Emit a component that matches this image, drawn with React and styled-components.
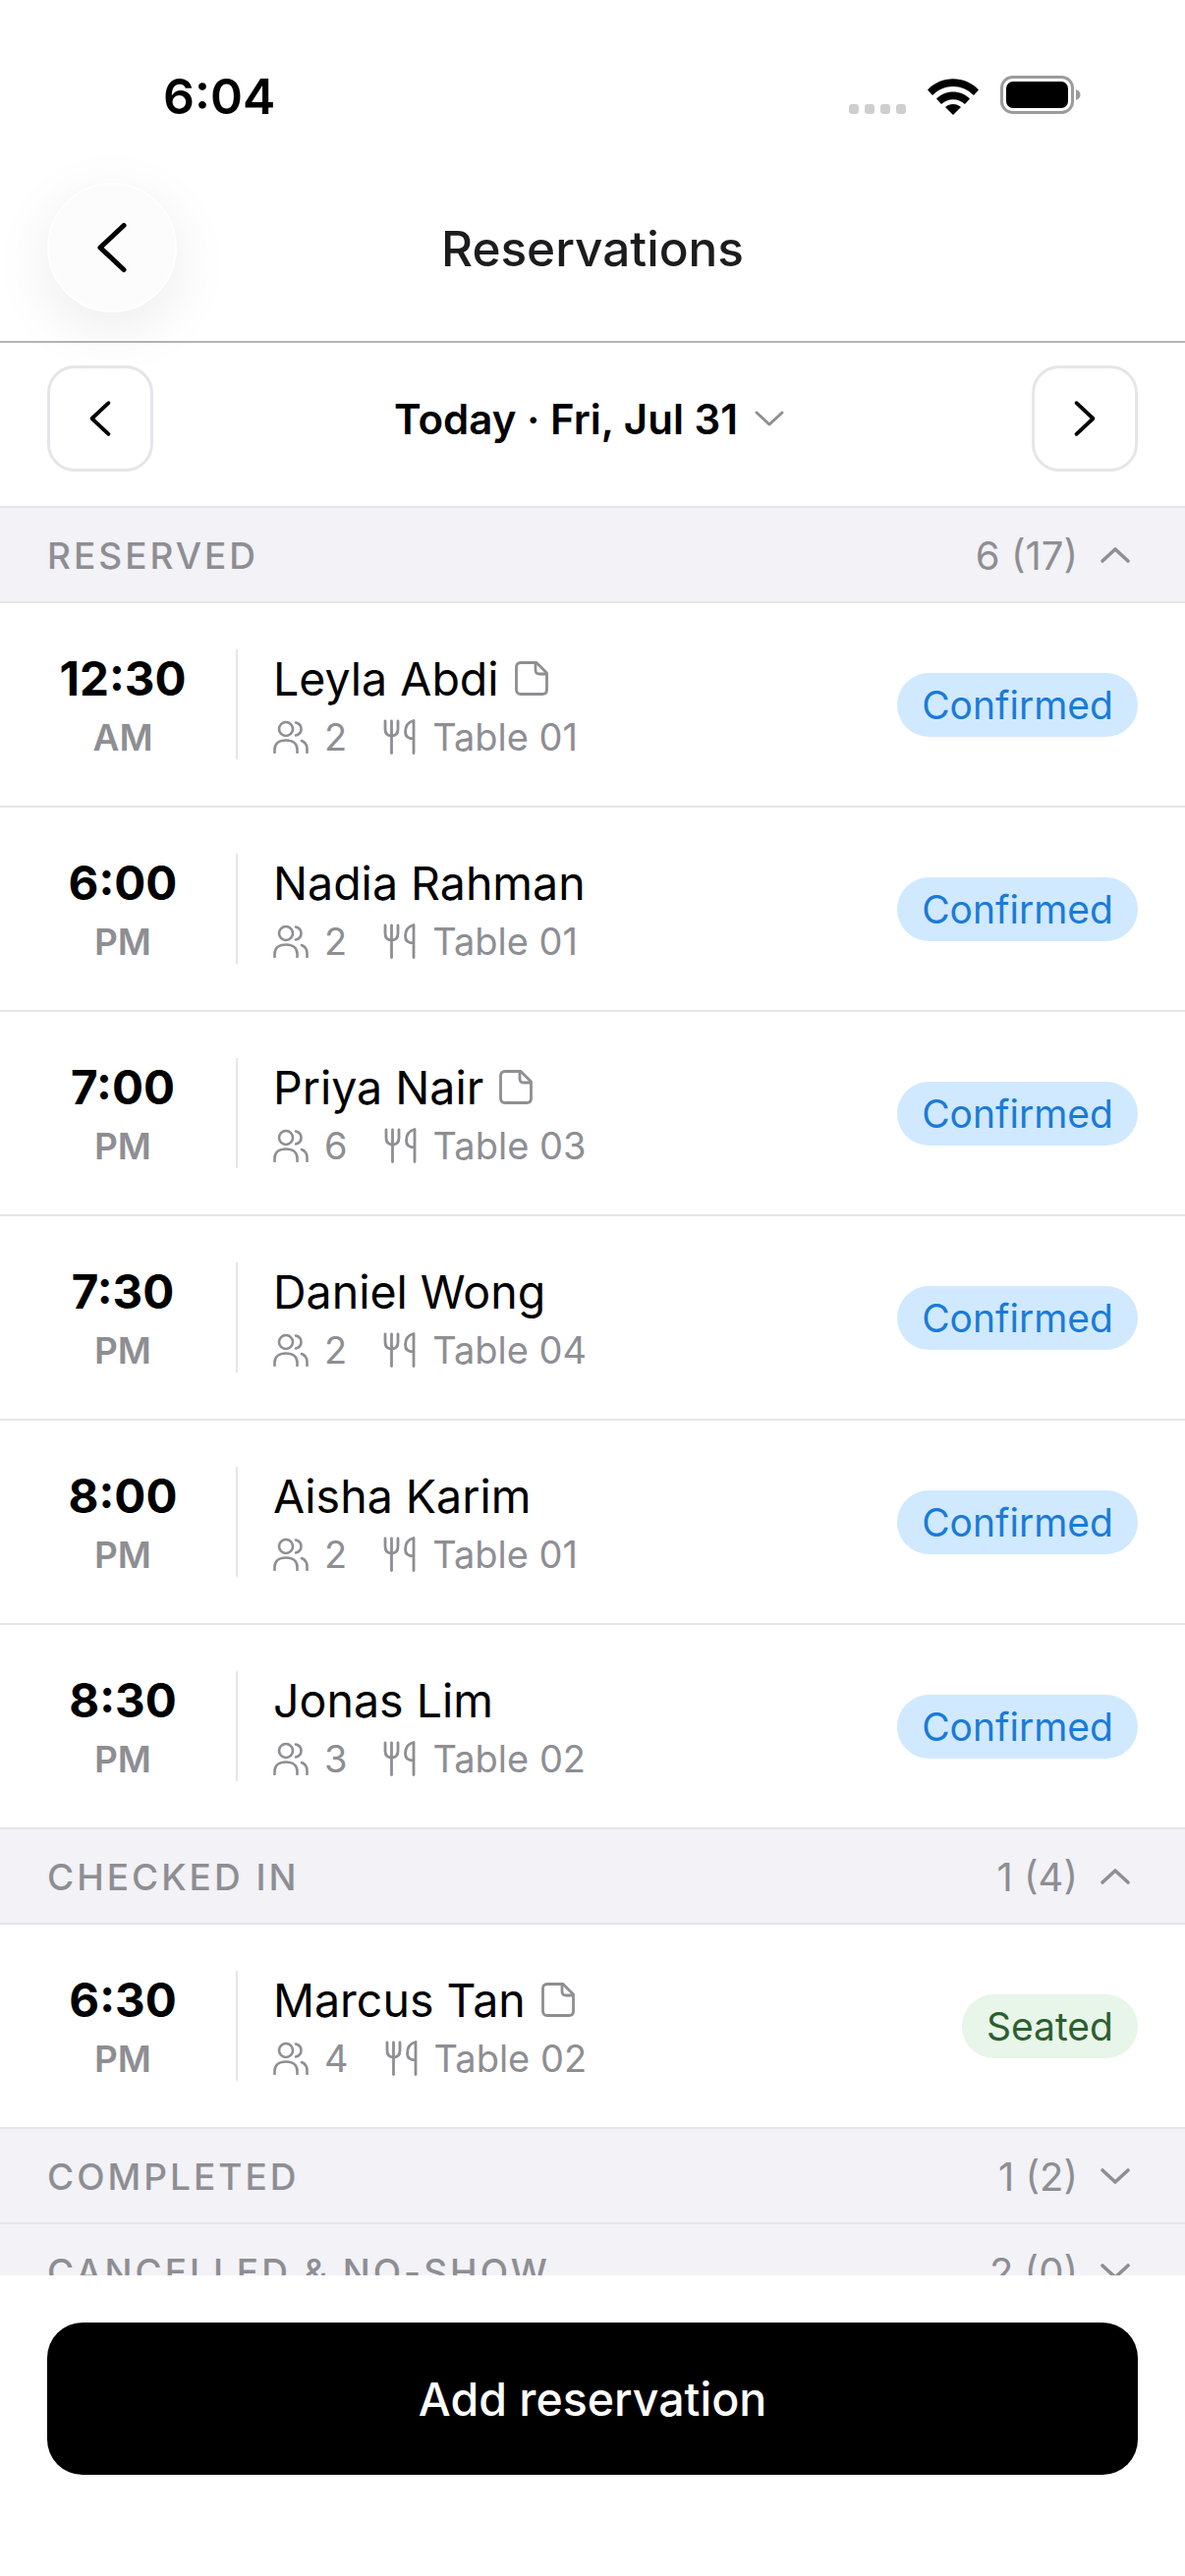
import React from "react";
import styled, { createGlobalStyle } from "styled-components";

const GlobalStyle = createGlobalStyle`
  html, body { margin: 0; padding: 0; background: #fff; }
  body { font-family: Inter, "Noto Sans", sans-serif; }
  * { box-sizing: border-box; }
`;

const sections = [
  {
    title: "RESERVED",
    count: "6 (17)",
    open: true,
    rows: [
      { time: "12:30", half: "AM", name: "Leyla Abdi", note: true, guests: 2, table: "Table 01", status: "Confirmed" },
      { time: "6:00", half: "PM", name: "Nadia Rahman", guests: 2, table: "Table 01", status: "Confirmed" },
      { time: "7:00", half: "PM", name: "Priya Nair", note: true, guests: 6, table: "Table 03", status: "Confirmed" },
      { time: "7:30", half: "PM", name: "Daniel Wong", guests: 2, table: "Table 04", status: "Confirmed" },
      { time: "8:00", half: "PM", name: "Aisha Karim", guests: 2, table: "Table 01", status: "Confirmed" },
      { time: "8:30", half: "PM", name: "Jonas Lim", guests: 3, table: "Table 02", status: "Confirmed" },
    ],
  },
  {
    title: "CHECKED IN",
    count: "1 (4)",
    open: true,
    rows: [{ time: "6:30", half: "PM", name: "Marcus Tan", note: true, guests: 4, table: "Table 02", status: "Seated" }],
  },
  { title: "COMPLETED", count: "1 (2)", open: false, rows: [] },
  { title: "CANCELLED & NO-SHOW", count: "2 (0)", open: false, rows: [] },
];

const Chevron = ({ dir, size = 38, color = "#000", width = 3.6 }) => {
  const paths = {
    left: "M26 3 L10 18 L26 33",
    right: "M10 3 L26 18 L10 33",
    up: "M5 24 L18 12 L31 24",
    down: "M5 12 L18 24 L31 12",
  };
  return (
    <svg width={size} height={size} viewBox="0 0 36 36" fill="none">
      <path d={paths[dir]} stroke={color} strokeWidth={width} strokeLinecap="round" strokeLinejoin="round" />
    </svg>
  );
};

const WifiIcon = () => (
  <svg width="52" height="38" viewBox="0 0 52 38">
    <path d="M0 12.5 C14 -2.5 38 -2.5 52 12.5 L47 18 C35 6 17 6 5 18 Z" fill="#000" />
    <path d="M9 21.5 C18 12 34 12 43 21.5 L38 27 C31 20.5 21 20.5 14 27 Z" fill="#000" />
    <path d="M18 30 C22.5 26 29.5 26 34 30 L26 38 Z" fill="#000" />
  </svg>
);

const BatteryIcon = () => (
  <svg width="82" height="40" viewBox="0 0 82 40">
    <rect x="1.5" y="1.5" width="72" height="36" rx="11" fill="none" stroke="#9b9b9b" strokeWidth="3" />
    <rect x="6" y="6" width="63" height="27" rx="7" fill="#000" />
    <path d="M77 14 C80 15 81.5 17 81.5 19.5 C81.5 22 80 24 77 25 Z" fill="#9b9b9b" />
  </svg>
);

const PeopleIcon = () => (
  <svg width="36" height="34" viewBox="0 0 36 34" fill="none" stroke="#8e8e93" strokeWidth="2.6" strokeLinecap="round">
    <circle cx="13" cy="9" r="7" />
    <path d="M1.5 33 V30 C1.5 24 6 20.5 13 20.5 C20 20.5 24.5 24 24.5 30 V33" />
    <path d="M23 2.5 C27 3.5 28.5 6 28.5 9 C28.5 12 27 14.5 23 15.5" />
    <path d="M29 21 C32.5 22.5 34.5 25.5 34.5 29 V33" />
  </svg>
);

const UtensilsIcon = () => (
  <svg width="34" height="36" viewBox="0 0 34 36" fill="none" stroke="#8e8e93" strokeWidth="2.8" strokeLinecap="round" strokeLinejoin="round">
    <path d="M2 2 V10 C2 15 5 17 8.5 17 C12 17 15 15 15 10 V2" />
    <path d="M8.5 2 V34.5" />
    <path d="M31 34.5 V1.5 C25 3 22.5 8 22.5 13 C22.5 17.5 25 20 31 20" />
  </svg>
);

const NoteIcon = () => (
  <svg width="34" height="35" viewBox="0 0 34 35" fill="none" stroke="#8e8e93" strokeWidth="2.8" strokeLinejoin="round">
    <path d="M6 1.5 H22 L32.5 12 V29 C32.5 31.5 31 33.5 28 33.5 H6 C3 33.5 1.5 31.5 1.5 29 V6 C1.5 3.5 3 1.5 6 1.5 Z" />
    <path d="M21 1.5 V9 C21 11.5 22.5 13 25 13 H32.5" />
  </svg>
);

const App = () => (
  <Screen>
    <GlobalStyle />
    <StatusBar>
      <Clock>6:04</Clock>
      <StatusIcons>
        <Signal>
          <i />
          <i />
          <i />
          <i />
        </Signal>
        <WifiIcon />
        <BatteryIcon />
      </StatusIcons>
    </StatusBar>

    <Header>
      <BackButton>
        <Chevron dir="left" size={54} width={3.4} />
      </BackButton>
      <Title>Reservations</Title>
      <span />
    </Header>

    <DateBar>
      <DateButton>
        <Chevron dir="left" />
      </DateButton>
      <DateLabel>
        Today · Fri, Jul 31
        <Chevron dir="down" size={36} color="#8e8e93" width={3} />
      </DateLabel>
      <DateButton>
        <Chevron dir="right" />
      </DateButton>
    </DateBar>

    <List>
      {sections.map((section) => (
        <section key={section.title}>
          <SectionHead>
            <SectionTitle>{section.title}</SectionTitle>
            <SectionMeta>
              {section.count}
              <Chevron dir={section.open ? "up" : "down"} size={36} color="#8e8e93" />
            </SectionMeta>
          </SectionHead>
          {section.rows.map((row) => (
            <Row key={row.name}>
              <TimeCol>
                <Time>{row.time}</Time>
                <Half>{row.half}</Half>
              </TimeCol>
              <Divider />
              <Info>
                <NameLine>
                  <Name>{row.name}</Name>
                  {row.note && <NoteIcon />}
                </NameLine>
                <Meta>
                  <MetaItem>
                    <PeopleIcon />
                    {row.guests}
                  </MetaItem>
                  <MetaItem>
                    <UtensilsIcon />
                    {row.table}
                  </MetaItem>
                </Meta>
              </Info>
              <Pill $status={row.status}>{row.status}</Pill>
            </Row>
          ))}
        </section>
      ))}
    </List>

    <Footer>
      <AddButton>Add reservation</AddButton>
    </Footer>
  </Screen>
);

const Screen = styled.div`
  width: 1206px;
  height: 2622px;
  display: flex;
  flex-direction: column;
  overflow: hidden;
  background: #fff;
  color: #000;
`;

const StatusBar = styled.div`
  height: 186px;
  flex: none;
  display: flex;
  align-items: flex-start;
  justify-content: space-between;
  padding: 68px 106px 0 166px;
`;

const Clock = styled.div`
  font-size: 50px;
  line-height: 60px;
  font-weight: 600;
`;

const StatusIcons = styled.div`
  display: flex;
  align-items: flex-end;
  gap: 22px;
  height: 40px;
  margin-top: 9px;
`;

const Signal = styled.div`
  display: flex;
  gap: 6px;
  padding-bottom: 1px;
  & > i {
    width: 10px;
    height: 10px;
    border-radius: 3px;
    background: #cfcfcf;
  }
`;

const Header = styled.header`
  position: relative;
  z-index: 1;
  height: 163px;
  flex: none;
  display: grid;
  grid-template-columns: 1fr auto 1fr;
  align-items: start;
  padding: 0 48px;
  border-bottom: 2px solid #b4b4b6;
`;

const BackButton = styled.div`
  width: 132px;
  height: 132px;
  border-radius: 50%;
  background: #fcfcfc;
  border: 2px solid #fff;
  display: flex;
  align-items: center;
  justify-content: center;
  box-shadow: 0 16px 60px rgba(0, 0, 0, 0.08);
`;

const Title = styled.h1`
  margin: 0;
  font-size: 49.5px;
  line-height: 134px;
  font-weight: 550;
  color: #1c1c1e;
`;

const DateBar = styled.div`
  height: 168px;
  flex: none;
  display: flex;
  align-items: center;
  justify-content: space-between;
  padding: 0 48px 12px;
  border-bottom: 2px solid #e5e5ea;
`;

const DateButton = styled.div`
  width: 108px;
  height: 108px;
  border: 3px solid #e5e5ea;
  border-radius: 28px;
  display: flex;
  align-items: center;
  justify-content: center;
`;

const DateLabel = styled.div`
  display: flex;
  align-items: center;
  gap: 14px;
  margin-right: 4px;
  font-size: 42px;
  font-weight: 600;
`;

const List = styled.div`
  flex: 1;
  min-height: 0;
  overflow: hidden;
`;

const SectionHead = styled.div`
  height: 97px;
  display: flex;
  align-items: center;
  justify-content: space-between;
  padding: 1px 48px 0;
  background: #f2f2f7;
  border-bottom: 2px solid #e5e5ea;
`;

const SectionTitle = styled.div`
  font-size: 37px;
  font-weight: 500;
  letter-spacing: 3px;
  color: #8e8e93;
`;

const SectionMeta = styled.div`
  display: flex;
  align-items: center;
  gap: 20px;
  margin-right: 5px;
  font-size: 40px;
  color: #8e8e93;
`;

const Row = styled.div`
  height: 208px;
  display: flex;
  align-items: center;
  padding: 0 48px;
  border-bottom: 2px solid #e5e5ea;
`;

const TimeCol = styled.div`
  width: 154px;
  padding-top: 2px;
  display: flex;
  flex-direction: column;
  align-items: center;
  gap: 9px;
`;

const Time = styled.div`
  font-size: 47.5px;
  line-height: 56px;
  font-weight: 650;
`;

const Half = styled.div`
  font-size: 37px;
  line-height: 46px;
  font-weight: 600;
  color: #8e8e93;
`;

const Divider = styled.div`
  width: 2px;
  height: 112px;
  margin: 0 36px 0 38px;
  background: #e5e5ea;
`;

const Info = styled.div`
  flex: 1;
  min-width: 0;
  padding-top: 1px;
  display: flex;
  flex-direction: column;
  gap: 8px;
`;

const NameLine = styled.div`
  display: flex;
  align-items: center;
  gap: 16px;
`;

const Name = styled.div`
  font-size: 46.5px;
  line-height: 56px;
  font-weight: 440;
`;

const Meta = styled.div`
  display: flex;
  align-items: center;
  gap: 37px;
  font-size: 38px;
  line-height: 46px;
  color: #8e8e93;
`;

const MetaItem = styled.div`
  display: flex;
  align-items: center;
  gap: 16px;
`;

const Pill = styled.div`
  height: 65px;
  padding: 0 25px;
  border-radius: 33px;
  display: flex;
  align-items: center;
  font-size: 39px;
  background: ${(p) => (p.$status === "Seated" ? "#e8f5e9" : "#d0e9fe")};
  color: ${(p) => (p.$status === "Seated" ? "#2b5f2f" : "#1a7bd8")};
`;

const Footer = styled.div`
  height: 306px;
  flex: none;
  padding: 48px 48px 0;
  background: #fff;
`;

const AddButton = styled.div`
  height: 155px;
  border-radius: 36px;
  background: #000;
  color: #fff;
  display: flex;
  align-items: center;
  justify-content: center;
  font-size: 46.5px;
  font-weight: 550;
`;

export default App;
